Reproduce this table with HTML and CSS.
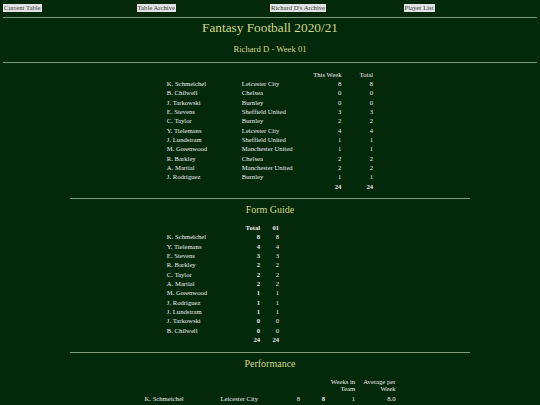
FILE: index.html
```html
<!DOCTYPE html>
<html>
<head>
<meta charset="utf-8">
<link rel="stylesheet" href="styles.css">
</head>
<body>
<nav class="nav">
  <div class="nav-cell"><a class="nav-link" href="#">Current Table</a></div>
  <div class="nav-cell"><a class="nav-link" href="#">Table Archive</a></div>
  <div class="nav-cell"><a class="nav-link" href="#">Richard D's Archive</a></div>
  <div class="nav-cell"><a class="nav-link" href="#">Player List</a></div>
</nav>
<hr class="rule rule-full rule-1">
<h1 class="title">Fantasy Football 2020/21</h1>
<h2 class="subtitle">Richard D - Week 01</h2>
<hr class="rule rule-full rule-2">

<table class="grid team-table">
  <colgroup><col class="c-name"><col class="c-team"><col class="c-week"><col class="c-total"></colgroup>
  <thead>
    <tr><th></th><th></th><th class="num">This Week</th><th class="num">Total</th></tr>
  </thead>
  <tbody>
    <tr><td>K. Schmeichel</td><td>Leicester City</td><td class="num">8</td><td class="num">8</td></tr>
    <tr><td>B. Chilwell</td><td>Chelsea</td><td class="num">0</td><td class="num">0</td></tr>
    <tr><td>J. Tarkowski</td><td>Burnley</td><td class="num">0</td><td class="num">0</td></tr>
    <tr><td>E. Stevens</td><td>Sheffield United</td><td class="num">3</td><td class="num">3</td></tr>
    <tr><td>C. Taylor</td><td>Burnley</td><td class="num">2</td><td class="num">2</td></tr>
    <tr><td>Y. Tielemans</td><td>Leicester City</td><td class="num">4</td><td class="num">4</td></tr>
    <tr><td>J. Lundstram</td><td>Sheffield United</td><td class="num">1</td><td class="num">1</td></tr>
    <tr><td>M. Greenwood</td><td>Manchester United</td><td class="num">1</td><td class="num">1</td></tr>
    <tr><td>R. Barkley</td><td>Chelsea</td><td class="num">2</td><td class="num">2</td></tr>
    <tr><td>A. Martial</td><td>Manchester United</td><td class="num">2</td><td class="num">2</td></tr>
    <tr><td>J. Rodriguez</td><td>Burnley</td><td class="num">1</td><td class="num">1</td></tr>
    <tr class="totals"><td></td><td></td><td class="num">24</td><td class="num">24</td></tr>
  </tbody>
</table>

<hr class="rule rule-mid rule-3">
<h3 class="section">Form Guide</h3>

<div class="form-wrap">
<table class="grid form-table">
  <colgroup><col class="f-name"><col class="f-total"><col class="f-wk"></colgroup>
  <thead>
    <tr><th></th><th class="num strong">Total</th><th class="num strong">01</th></tr>
  </thead>
  <tbody>
    <tr><td>K. Schmeichel</td><td class="num strong">8</td><td class="num">8</td></tr>
    <tr><td>Y. Tielemans</td><td class="num strong">4</td><td class="num">4</td></tr>
    <tr><td>E. Stevens</td><td class="num strong">3</td><td class="num">3</td></tr>
    <tr><td>R. Barkley</td><td class="num strong">2</td><td class="num">2</td></tr>
    <tr><td>C. Taylor</td><td class="num strong">2</td><td class="num">2</td></tr>
    <tr><td>A. Martial</td><td class="num strong">2</td><td class="num">2</td></tr>
    <tr><td>M. Greenwood</td><td class="num strong">1</td><td class="num">1</td></tr>
    <tr><td>J. Rodriguez</td><td class="num strong">1</td><td class="num">1</td></tr>
    <tr><td>J. Lundstram</td><td class="num strong">1</td><td class="num">1</td></tr>
    <tr><td>J. Tarkowski</td><td class="num strong">0</td><td class="num">0</td></tr>
    <tr><td>B. Chilwell</td><td class="num strong">0</td><td class="num">0</td></tr>
    <tr class="totals"><td></td><td class="num">24</td><td class="num">24</td></tr>
  </tbody>
</table>
</div>

<hr class="rule rule-mid rule-4">
<h3 class="section">Performance</h3>

<table class="grid perf-table">
  <colgroup><col class="p-name"><col class="p-team"><col class="p-a"><col class="p-b"><col class="p-c"><col class="p-d"></colgroup>
  <thead>
    <tr><th></th><th></th><th></th><th></th><th class="num">Weeks in Team</th><th class="num">Average per Week</th></tr>
  </thead>
  <tbody>
    <tr><td>K. Schmeichel</td><td>Leicester City</td><td class="num">8</td><td class="num strong">8</td><td class="num">1</td><td class="num">8.0</td></tr>
  </tbody>
</table>
</body>
</html>
```
FILE: styles.css
```css
html, body {
  margin: 0;
  background: #03280a;
}
body {
  padding: 0 3px;
  font-family: "Liberation Serif", "Times New Roman", serif;
  color: #ececec;
  height: 405px;
  overflow: hidden;
}
.nav {
  display: grid;
  grid-template-columns: repeat(4, 1fr);
  padding-top: 4px;
  height: 8px;
}
.nav-cell {
  display: flex;
  align-items: flex-start;
}
.nav-link {
  display: block;
  background: #e2e2e2;
  color: #3a3a3a;
  font-size: 6.67px;
  line-height: 8px;
  text-decoration: none;
  padding: 0 1px;
}
.rule {
  border: none;
  height: 1px;
  background: #7f9d7a;
  margin: 0;
}
.rule-full { width: 100%; }
.rule-mid { width: 400px; margin-left: auto; margin-right: auto; }
.rule-1 { margin-top: 5px; }
.rule-2 { margin-top: 8px; }
.rule-3 { margin-top: 7px; }
.rule-4 { margin-top: 7.5px; }

.title {
  margin: 2px 0 0;
  text-align: center;
  font-weight: normal;
  font-size: 13.3px;
  line-height: 16px;
  color: #d2d788;
}
.subtitle {
  margin: 7.5px 0 0;
  text-align: center;
  font-weight: normal;
  font-size: 8.67px;
  line-height: 10px;
  color: #d2d788;
}
.subtitle + .rule-2 { margin-top: 8.5px; }
.section {
  margin: 5.3px 0 0;
  text-align: center;
  font-weight: normal;
  font-size: 10px;
  line-height: 12px;
  color: #d2d788;
}

.grid {
  border-collapse: collapse;
  table-layout: fixed;
  font-size: 6.67px;
  line-height: 9.33px;
}
.grid th, .grid td {
  padding: 0;
  text-align: left;
  font-weight: normal;
  white-space: nowrap;
  vertical-align: bottom;
}
.grid .num { text-align: right; }
.grid .strong { font-weight: bold; }
.grid .totals td { font-weight: bold; }

.team-table {
  width: 206.3px;
  margin: 6.6px auto 0;
}
.c-name { width: 75px; }
.c-team { width: 71.3px; }
.c-week { width: 28.2px; }
.c-total { width: 31.8px; }

.form-wrap {
  width: 206.3px;
  margin: 6.8px auto 0;
}
.form-table { width: 112.3px; }
.f-name { width: 75px; }
.f-total { width: 18.3px; }
.f-wk { width: 19px; }

.perf-table {
  width: 251px;
  margin: 9.4px auto 0;
}
.perf-table thead th {
  white-space: normal;
  line-height: 6.6px;
}
.perf-table tbody td { padding-top: 1px; }
.p-name { width: 76px; }
.p-team { width: 60px; }
.p-a { width: 19.7px; }
.p-b { width: 25px; }
.p-c { width: 30px; }
.p-d { width: 40.3px; }
```
